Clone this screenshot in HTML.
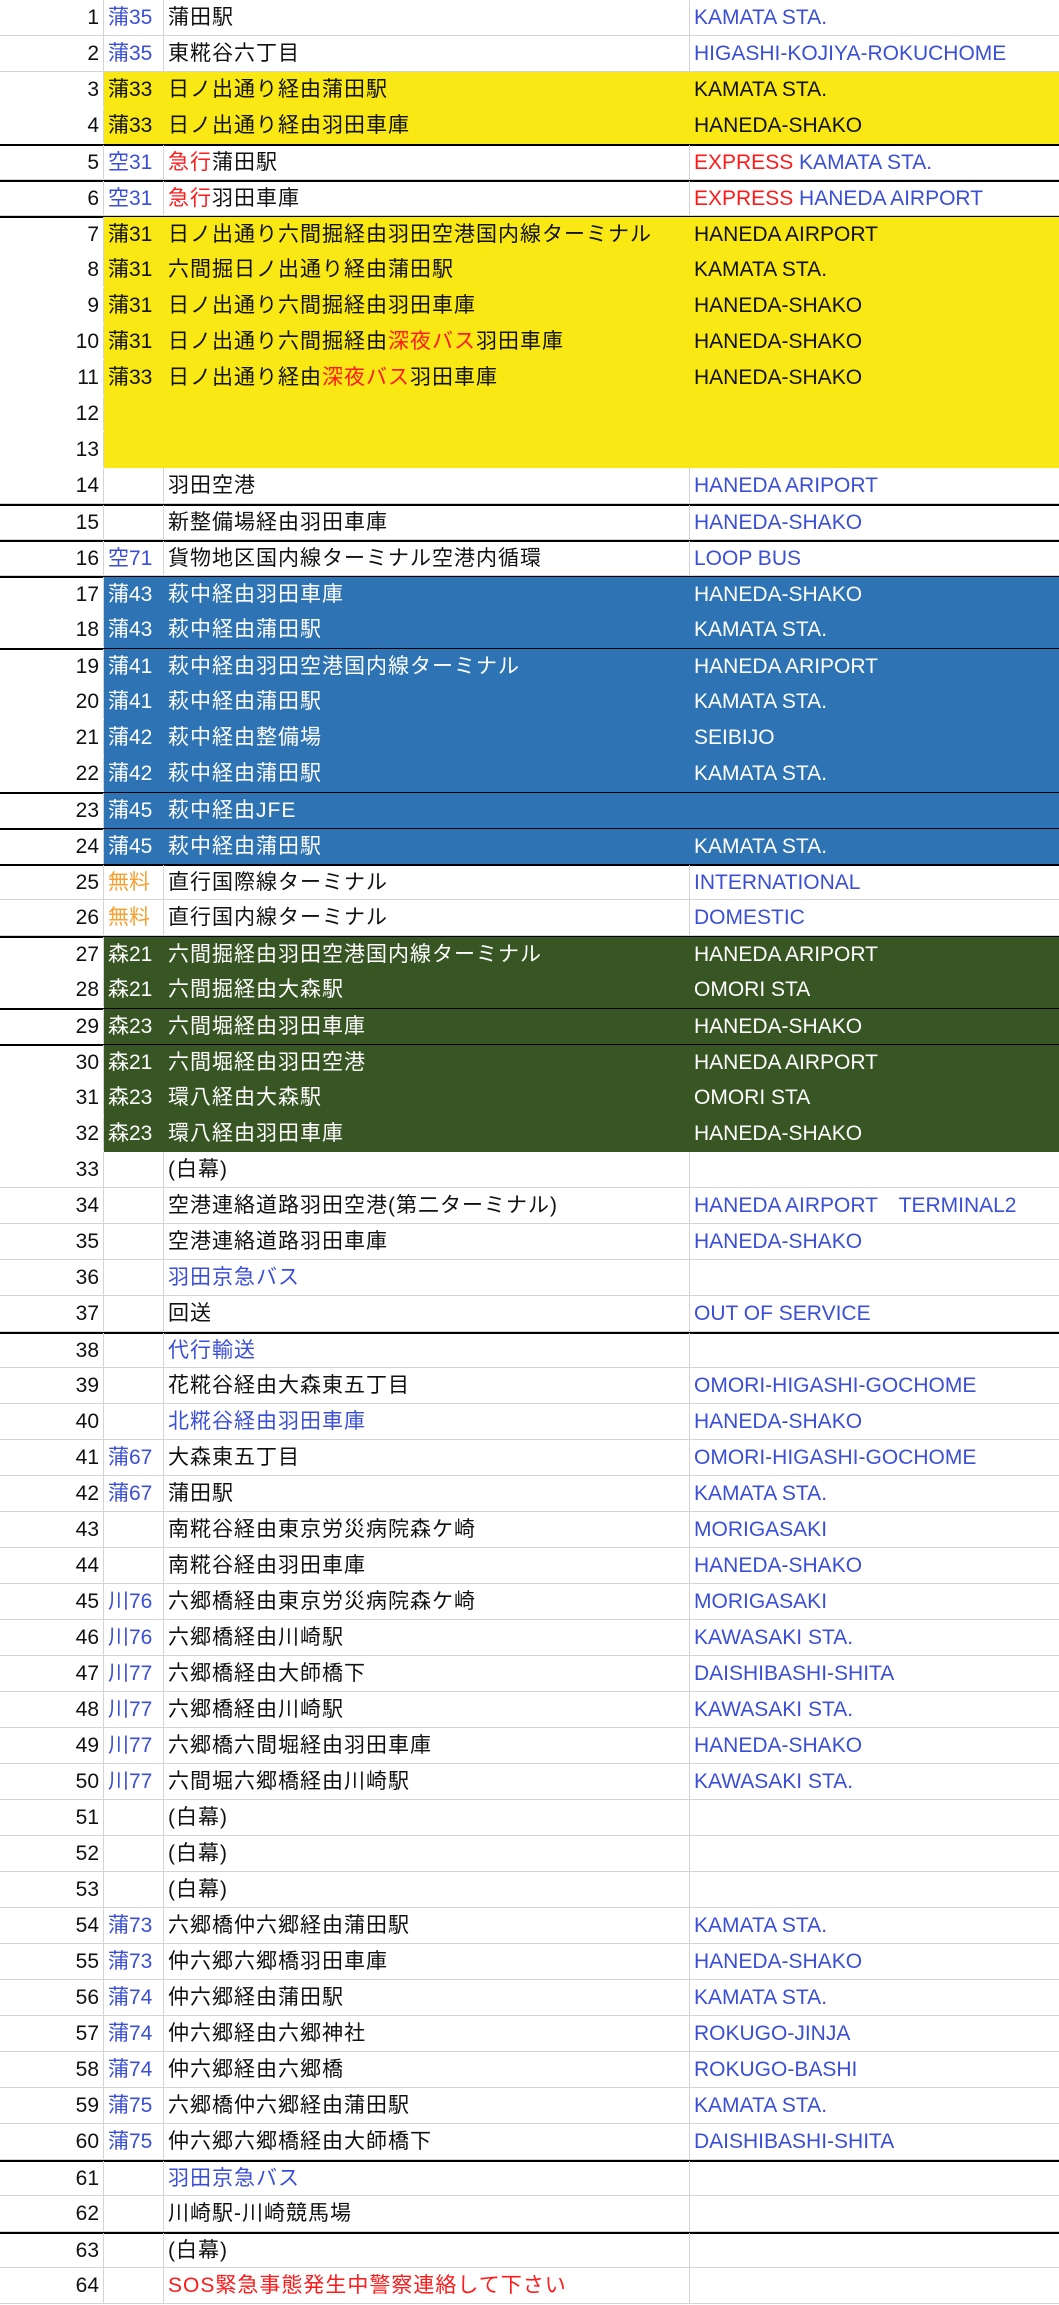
<!DOCTYPE html>
<html><head><meta charset="utf-8"><style>
*{margin:0;padding:0;box-sizing:border-box}
body{width:1059px;height:2305px;background:#fff;font-family:"Liberation Sans","Noto Sans CJK JP",sans-serif;font-size:21px;color:#111;position:relative;overflow:hidden}
.r{position:relative;height:36px;border-bottom:1px solid #d4d4d4}
.r>i,.r>s,.r>u,.r>b{position:absolute;top:0;height:35px;line-height:35px;font-style:normal;text-decoration:none;font-weight:normal;white-space:nowrap;border-right:1px solid #d4d4d4}
.r>i{left:0;width:104px;text-align:right;padding-right:4px;color:#111}
.r>s{left:104px;width:60px;padding-left:4px;color:#3b4fd6}
.r>u{left:164px;width:526px;padding-left:4px;letter-spacing:1px}
.r>b{left:690px;width:369px;padding-left:4px;color:#3b4fd6;border-right:none}
.t{border-top:2px solid #000;height:36px}
.t>i,.t>s,.t>u,.t>b{top:-2px;height:36px;line-height:36px;margin-top:1px}
.y>s,.y>u,.y>b{background:#f9e814;color:#111;border-right-color:#f9e814}
.b>s,.b>u,.b>b{background:#2e74b5;color:#fff;border-right-color:#2e74b5}
.g>s,.g>u,.g>b{background:#375623;color:#fff;border-right-color:#375623}
.y,.b,.g{border-bottom-color:transparent}
.y>s,.y>u,.y>b,.b>s,.b>u,.b>b,.g>s,.g>u,.g>b{height:36px}
.rd{color:#ff1a1a}.bl{color:#3b4fd6}.r>s.or{color:#f7a030}
</style></head><body>
<div class="r"><i>1</i><s>蒲35</s><u>蒲田駅</u><b>KAMATA STA.</b></div>
<div class="r"><i>2</i><s>蒲35</s><u>東糀谷六丁目</u><b>HIGASHI-KOJIYA-ROKUCHOME</b></div>
<div class="r y"><i>3</i><s>蒲33</s><u>日ノ出通り経由蒲田駅</u><b>KAMATA STA.</b></div>
<div class="r y"><i>4</i><s>蒲33</s><u>日ノ出通り経由羽田車庫</u><b>HANEDA-SHAKO</b></div>
<div class="r t"><i>5</i><s>空31</s><u><span class="rd">急行</span>蒲田駅</u><b><span class="rd">EXPRESS</span> KAMATA STA.</b></div>
<div class="r t"><i>6</i><s>空31</s><u><span class="rd">急行</span>羽田車庫</u><b><span class="rd">EXPRESS</span> HANEDA AIRPORT</b></div>
<div class="r y t"><i>7</i><s>蒲31</s><u>日ノ出通り六間掘経由羽田空港国内線ターミナル</u><b>HANEDA AIRPORT</b></div>
<div class="r y"><i>8</i><s>蒲31</s><u>六間掘日ノ出通り経由蒲田駅</u><b>KAMATA STA.</b></div>
<div class="r y"><i>9</i><s>蒲31</s><u>日ノ出通り六間掘経由羽田車庫</u><b>HANEDA-SHAKO</b></div>
<div class="r y"><i>10</i><s>蒲31</s><u>日ノ出通り六間掘経由<span class="rd">深夜バス</span>羽田車庫</u><b>HANEDA-SHAKO</b></div>
<div class="r y"><i>11</i><s>蒲33</s><u>日ノ出通り経由<span class="rd">深夜バス</span>羽田車庫</u><b>HANEDA-SHAKO</b></div>
<div class="r y"><i>12</i><s></s><u></u><b></b></div>
<div class="r y"><i>13</i><s></s><u></u><b></b></div>
<div class="r"><i>14</i><s></s><u>羽田空港</u><b>HANEDA ARIPORT</b></div>
<div class="r t"><i>15</i><s></s><u>新整備場経由羽田車庫</u><b>HANEDA-SHAKO</b></div>
<div class="r t"><i>16</i><s>空71</s><u>貨物地区国内線ターミナル空港内循環</u><b>LOOP BUS</b></div>
<div class="r b t"><i>17</i><s>蒲43</s><u>萩中経由羽田車庫</u><b>HANEDA-SHAKO</b></div>
<div class="r b"><i>18</i><s>蒲43</s><u>萩中経由蒲田駅</u><b>KAMATA STA.</b></div>
<div class="r b t"><i>19</i><s>蒲41</s><u>萩中経由羽田空港国内線ターミナル</u><b>HANEDA ARIPORT</b></div>
<div class="r b"><i>20</i><s>蒲41</s><u>萩中経由蒲田駅</u><b>KAMATA STA.</b></div>
<div class="r b"><i>21</i><s>蒲42</s><u>萩中経由整備場</u><b>SEIBIJO</b></div>
<div class="r b"><i>22</i><s>蒲42</s><u>萩中経由蒲田駅</u><b>KAMATA STA.</b></div>
<div class="r b t"><i>23</i><s>蒲45</s><u>萩中経由JFE</u><b></b></div>
<div class="r b t"><i>24</i><s>蒲45</s><u>萩中経由蒲田駅</u><b>KAMATA STA.</b></div>
<div class="r t"><i>25</i><s class="or">無料</s><u>直行国際線ターミナル</u><b>INTERNATIONAL</b></div>
<div class="r"><i>26</i><s class="or">無料</s><u>直行国内線ターミナル</u><b>DOMESTIC</b></div>
<div class="r g t"><i>27</i><s>森21</s><u>六間掘経由羽田空港国内線ターミナル</u><b>HANEDA ARIPORT</b></div>
<div class="r g"><i>28</i><s>森21</s><u>六間掘経由大森駅</u><b>OMORI STA</b></div>
<div class="r g t"><i>29</i><s>森23</s><u>六間堀経由羽田車庫</u><b>HANEDA-SHAKO</b></div>
<div class="r g t"><i>30</i><s>森21</s><u>六間堀経由羽田空港</u><b>HANEDA AIRPORT</b></div>
<div class="r g"><i>31</i><s>森23</s><u>環八経由大森駅</u><b>OMORI STA</b></div>
<div class="r g"><i>32</i><s>森23</s><u>環八経由羽田車庫</u><b>HANEDA-SHAKO</b></div>
<div class="r"><i>33</i><s></s><u>(白幕)</u><b></b></div>
<div class="r"><i>34</i><s></s><u>空港連絡道路羽田空港(第二ターミナル)</u><b>HANEDA AIRPORT　TERMINAL2</b></div>
<div class="r"><i>35</i><s></s><u>空港連絡道路羽田車庫</u><b>HANEDA-SHAKO</b></div>
<div class="r"><i>36</i><s></s><u class="bl">羽田京急バス</u><b></b></div>
<div class="r"><i>37</i><s></s><u>回送</u><b>OUT OF SERVICE</b></div>
<div class="r t"><i>38</i><s></s><u class="bl">代行輸送</u><b></b></div>
<div class="r"><i>39</i><s></s><u>花糀谷経由大森東五丁目</u><b>OMORI-HIGASHI-GOCHOME</b></div>
<div class="r"><i>40</i><s></s><u class="bl">北糀谷経由羽田車庫</u><b>HANEDA-SHAKO</b></div>
<div class="r"><i>41</i><s>蒲67</s><u>大森東五丁目</u><b>OMORI-HIGASHI-GOCHOME</b></div>
<div class="r"><i>42</i><s>蒲67</s><u>蒲田駅</u><b>KAMATA STA.</b></div>
<div class="r"><i>43</i><s></s><u>南糀谷経由東京労災病院森ケ崎</u><b>MORIGASAKI</b></div>
<div class="r"><i>44</i><s></s><u>南糀谷経由羽田車庫</u><b>HANEDA-SHAKO</b></div>
<div class="r"><i>45</i><s>川76</s><u>六郷橋経由東京労災病院森ケ崎</u><b>MORIGASAKI</b></div>
<div class="r"><i>46</i><s>川76</s><u>六郷橋経由川崎駅</u><b>KAWASAKI STA.</b></div>
<div class="r"><i>47</i><s>川77</s><u>六郷橋経由大師橋下</u><b>DAISHIBASHI-SHITA</b></div>
<div class="r"><i>48</i><s>川77</s><u>六郷橋経由川崎駅</u><b>KAWASAKI STA.</b></div>
<div class="r"><i>49</i><s>川77</s><u>六郷橋六間堀経由羽田車庫</u><b>HANEDA-SHAKO</b></div>
<div class="r"><i>50</i><s>川77</s><u>六間堀六郷橋経由川崎駅</u><b>KAWASAKI STA.</b></div>
<div class="r"><i>51</i><s></s><u>(白幕)</u><b></b></div>
<div class="r"><i>52</i><s></s><u>(白幕)</u><b></b></div>
<div class="r"><i>53</i><s></s><u>(白幕)</u><b></b></div>
<div class="r"><i>54</i><s>蒲73</s><u>六郷橋仲六郷経由蒲田駅</u><b>KAMATA STA.</b></div>
<div class="r"><i>55</i><s>蒲73</s><u>仲六郷六郷橋羽田車庫</u><b>HANEDA-SHAKO</b></div>
<div class="r"><i>56</i><s>蒲74</s><u>仲六郷経由蒲田駅</u><b>KAMATA STA.</b></div>
<div class="r"><i>57</i><s>蒲74</s><u>仲六郷経由六郷神社</u><b>ROKUGO-JINJA</b></div>
<div class="r"><i>58</i><s>蒲74</s><u>仲六郷経由六郷橋</u><b>ROKUGO-BASHI</b></div>
<div class="r"><i>59</i><s>蒲75</s><u>六郷橋仲六郷経由蒲田駅</u><b>KAMATA STA.</b></div>
<div class="r"><i>60</i><s>蒲75</s><u>仲六郷六郷橋経由大師橋下</u><b>DAISHIBASHI-SHITA</b></div>
<div class="r t"><i>61</i><s></s><u class="bl">羽田京急バス</u><b></b></div>
<div class="r"><i>62</i><s></s><u>川崎駅-川崎競馬場</u><b></b></div>
<div class="r t"><i>63</i><s></s><u>(白幕)</u><b></b></div>
<div class="r"><i>64</i><s></s><u class="rd">SOS緊急事態発生中警察連絡して下さい</u><b></b></div>
</body></html>
